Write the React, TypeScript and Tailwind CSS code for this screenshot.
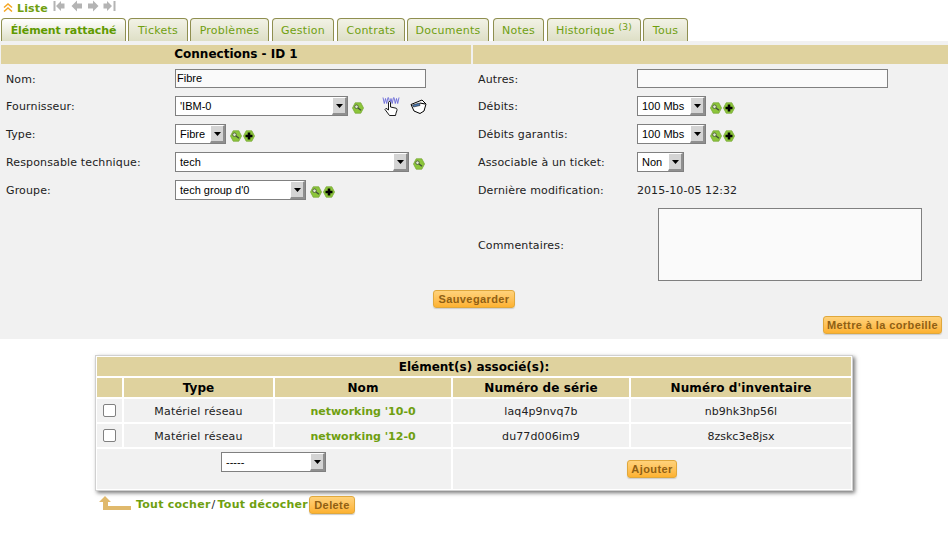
import type { ReactNode } from "react";

const FONT = "font-['DejaVu_Sans',sans-serif]";

function Hex({ children }: { children: ReactNode }) {
  return (
    <svg width="12" height="12" viewBox="0 0 12 12" className="shrink-0 mt-[3px]">
      <path d="M3.200.8h5.600L11.500 6 8.800 11.200H3.200L.5 6z" fill="#8cc63a" stroke="#7aa83a" strokeWidth=".8" strokeLinejoin="round" />
      {children}
    </svg>
  );
}

function SearchIcon() {
  return (
    <Hex>
      <circle cx="4.500" cy="4.700" r="1.800" fill="#dfe8d0" stroke="#44503a" strokeWidth=".8" />
      <path d="M6 6l3 2.300" stroke="#44503a" strokeWidth="1.400" />
    </Hex>
  );
}

function AddIcon() {
  return (
    <Hex>
      <path d="M6 2.500v7M2.500 6h7" stroke="#000" strokeWidth="2.600" />
    </Hex>
  );
}

function Select({ w, label }: { w: string; label: string }) {
  return (
    <div className={`${w} h-[20px] flex items-stretch border border-[#808080] bg-white font-['Liberation_Sans',sans-serif] text-[11px] text-black`}>
      <span className="flex-1 pl-[4px] leading-[18px] whitespace-nowrap overflow-hidden">{label}</span>
      <span className="w-[15px] flex items-center justify-center bg-[#d4d4d4] border-t border-l border-white border-r-2 border-b-2 border-r-[#8f8f8f] border-b-[#8f8f8f]">
        <svg width="7" height="4" viewBox="0 0 7 4"><path d="M0 0h7L3.500 4z" fill="#000" /></svg>
      </span>
    </div>
  );
}

function Btn({ w, children }: { w: string; children: ReactNode }) {
  return (
    <button className={`${w} h-[18px] rounded-[3px] border border-[#e0a83c] bg-gradient-to-b from-[#ffd27a] to-[#fdb22f] font-['Liberation_Sans',sans-serif] font-bold text-[11px] leading-[15px] text-[#8f5f14] tracking-[0.4px] shadow-[0_1px_1px_#ccc] whitespace-nowrap`}>
      {children}
    </button>
  );
}

function Row({ label, children, flat, labelW = "w-[169px]", labelPad = "" }: { label: string; children?: ReactNode; flat?: boolean; labelW?: string; labelPad?: string }) {
  return (
    <div className="h-[28px] flex items-center">
      <span className={`${labelW} ${labelPad} shrink-0 text-[11px] tracking-[0.14px] text-[#222]`}>{label}</span>
      <div className={flat ? "" : "-mt-[2px]"}>{children}</div>
    </div>
  );
}

function Tab({ w, ml, children, active }: { w: string; ml?: string; children: ReactNode; active?: boolean }) {
  return (
    <div
      className={`${w} ${ml ?? ""} h-[23px] text-center rounded-t-[4px] border border-b-0 border-[#8f8f50] text-[11px] leading-[23px] whitespace-nowrap bg-gradient-to-b ${
        active
          ? "from-white to-[#dedfc6] font-bold tracking-[-0.1px] text-[#5f9a00]"
          : "from-[#f2f2e6] to-[#dedfc6] tracking-[0.25px] text-[#6f9f10]"
      }`}
    >
      {children}
    </div>
  );
}

export default function App() {
  return (
    <div className={`${FONT} w-[948px] h-[540px] bg-white overflow-hidden`}>
      <div className="h-[18px] pl-[3px] flex items-start">
        <svg width="10" height="9" viewBox="0 0 10 9" fill="none" stroke="#f5a623" strokeWidth="1.500" className="mt-[3px]">
          <path d="M1 4.500L5 1l4 3.500M1 8.500L5 5l4 3.500" />
        </svg>
        <span className="ml-[4px] mt-[1px] text-[11px] font-bold tracking-[0.15px] text-[#6f9f10] leading-[16px]">Liste</span>
        <svg width="64" height="12" viewBox="0 0 64 12" fill="#b4b4b4" className="ml-[5px]">
          <path d="M.5 1h2v10h-2zM3 6l5-5v2.500h3.500v5H8V11z" />
          <path d="M18.500 6l5.500-5.500v3h5v5h-5v3z" />
          <path d="M45.500 6L40 .5v3h-5v5h5v3z" />
          <path d="M59 6l-5-5v2.500h-3.500v5H54V11zM60.500 1h2v10h-2z" />
        </svg>
      </div>

      <div className="h-[23px] pl-[1px] flex items-end gap-[2px]">
        <Tab w="w-[125px]" active>Élément rattaché</Tab>
        <Tab w="w-[60px]">Tickets</Tab>
        <Tab w="w-[79px]">Problèmes</Tab>
        <Tab w="w-[62px]" ml="ml-[1px]">Gestion</Tab>
        <Tab w="w-[68px]" ml="ml-[1px]">Contrats</Tab>
        <Tab w="w-[82px]">Documents</Tab>
        <Tab w="w-[51px]" ml="ml-[2px]">Notes</Tab>
        <Tab w="w-[94px]" ml="ml-[1px]">Historique <sup className="text-[9px]">(3)</sup></Tab>
        <Tab w="w-[45px]">Tous</Tab>
      </div>

      <div className="h-[298px] bg-[#f1f1f1] pt-[4px]">
        <div className="h-[19px] flex gap-[2px] pl-[1px] text-[12px] font-bold text-black leading-[19px]">
          <div className="w-[470px] bg-[#dfd29e] text-center">Connections - ID 1</div>
          <div className="flex-1 bg-[#dfd29e]" />
        </div>

        <div className="flex pt-[1px]">
          <div className="w-[472px] pl-[6px]">
            <Row label="Nom:" labelPad="pt-[2px]">
              <div className="w-[251px] h-[19px] border border-[#808080] bg-[#fafafa] font-['Liberation_Sans',sans-serif] text-[11px] leading-[17px] pl-[1px]">Fibre</div>
            </Row>
            <Row label="Fournisseur:">
              <div className="flex items-center gap-[4px]">
                <Select w="w-[173px]" label="'IBM-0" />
                <SearchIcon />
                <svg width="18" height="19" viewBox="0 0 18 19" className="ml-[14px]">
                  <path d="M1 .5l1.300 6 1.200-5 1.200 5L6 .5M6.500.5l1.300 6L9 1.500l1.200 5 1.300-6M12 .5l1.300 6 1.200-5 1.200 5L17 .5" fill="none" stroke="#6a6ad8" strokeWidth=".9" />
                  <path d="M7.500 18.500L3 12.500l1-1.200 2.500 1.700V5.500c0-1.300 2-1.300 2 0V10l5.500 1.200c1 .3 1 1 1 2l-1 3-.5 2.300z" fill="#fff" stroke="#000" strokeWidth=".9" />
                </svg>
                <svg width="17" height="15" viewBox="0 0 17 15" className="ml-[6px] mt-[1px]">
                  <path d="M1 5.500L12 1l4 4-2 7-4 2.500L4 12z" fill="#fff" stroke="#000" strokeWidth="1" />
                  <path d="M2.500 6l7-2 .5 2.500-6.500 1.500z" fill="#4a78b0" stroke="#000" strokeWidth=".5" />
                  <path d="M10 4l5 1" stroke="#000" strokeWidth="1.200" />
                </svg>
              </div>
            </Row>
            <Row label="Type:">
              <div className="flex items-center gap-[4px]">
                <Select w="w-[51px]" label="Fibre" />
                <div className="flex gap-[1px]"><SearchIcon /><AddIcon /></div>
              </div>
            </Row>
            <Row label="Responsable technique:">
              <div className="flex items-center gap-[4px]">
                <Select w="w-[234px]" label="tech" />
                <SearchIcon />
              </div>
            </Row>
            <Row label="Groupe:">
              <div className="flex items-center gap-[4px]">
                <Select w="w-[131px]" label="tech group d'0" />
                <div className="flex gap-[1px]"><SearchIcon /><AddIcon /></div>
              </div>
            </Row>
          </div>

          <div className="flex-1 pl-[6px]">
            <Row label="Autres:" labelW="w-[159px]" labelPad="pt-[2px]">
              <div className="w-[251px] h-[19px] border border-[#808080] bg-[#fafafa]" />
            </Row>
            <Row label="Débits:" labelW="w-[159px]">
              <div className="flex items-center gap-[4px]">
                <Select w="w-[69px]" label="100 Mbs" />
                <div className="flex gap-[1px]"><SearchIcon /><AddIcon /></div>
              </div>
            </Row>
            <Row label="Débits garantis:" labelW="w-[159px]">
              <div className="flex items-center gap-[4px]">
                <Select w="w-[69px]" label="100 Mbs" />
                <div className="flex gap-[1px]"><SearchIcon /><AddIcon /></div>
              </div>
            </Row>
            <Row label="Associable à un ticket:" labelW="w-[159px]">
              <Select w="w-[47px]" label="Non" />
            </Row>
            <Row label="Dernière modification:" labelW="w-[159px]" flat>
              <span className="block leading-[14px] text-[11px] tracking-[0.06px] text-[#222]">2015-10-05 12:32</span>
            </Row>
            <div className="h-[73px] mt-[3px] flex items-center">
              <span className="w-[180px] shrink-0 pt-[3px] text-[11px] tracking-[0.14px] text-[#222]">Commentaires:</span>
              <div className="w-[264px] h-[73px] border border-[#808080] bg-[#fafafa]" />
            </div>
          </div>
        </div>

        <div className="flex justify-center pt-[9px]"><Btn w="w-[82px]">Sauvegarder</Btn></div>
        <div className="flex justify-end pt-[8px] pr-[6px]"><Btn w="w-[119px]">Mettre à la corbeille</Btn></div>
      </div>

      <div className="ml-[95px] mt-[16px] w-[758px] h-[136px] bg-white border border-[#d0d0d0] p-[1px] shadow-[2px_2px_4px_#777] text-[11px]">
        <div className="h-[19px] bg-[#dfd29e] text-center text-[12px] font-bold leading-[20px] text-black">Elément(s) associé(s):</div>
        <div className="mt-[2px] grid grid-cols-[25px_149px_176px_176px_1fr] gap-[2px] text-center">
          <div className="h-[19px] bg-[#dfd29e]" />
          {["Type", "Nom", "Numéro de série", "Numéro d'inventaire"].map((h) => (
            <div key={h} className="h-[19px] bg-[#dfd29e] text-[12px] font-bold tracking-[0.1px] leading-[20px] text-black">{h}</div>
          ))}
          {[
            ["networking '10-0", "laq4p9nvq7b", "nb9hk3hp56l"],
            ["networking '12-0", "du77d006im9", "8zskc3e8jsx"],
          ].map(([name, serial, inv]) => (
            <div key={name} className="contents">
              <div className="h-[23px] bg-[#f1f1f1] flex items-center justify-center">
                <input type="checkbox" className="w-[13px] h-[13px] appearance-none rounded-[2px] border border-[#808080] bg-white" />
              </div>
              <div className="h-[23px] bg-[#f1f1f1] leading-[25px] tracking-[0.2px] text-[#222]">Matériel réseau</div>
              <div className="h-[23px] bg-[#f1f1f1] leading-[25px] font-bold text-[#6f9f10]">{name}</div>
              <div className="h-[23px] bg-[#f1f1f1] leading-[25px] tracking-[0.1px] text-[#222]">{serial}</div>
              <div className="h-[23px] bg-[#f1f1f1] leading-[25px] text-[#222]">{inv}</div>
            </div>
          ))}
        </div>
        <div className="mt-[2px] grid grid-cols-[354px_1fr] gap-[2px]">
          <div className="h-[40px] bg-[#f1f1f1] pt-[3px] pr-[1px] flex justify-center">
            <Select w="w-[105px]" label="-----" />
          </div>
          <div className="h-[40px] bg-[#f1f1f1] pt-[11px] flex justify-center"><Btn w="w-[50px]">Ajouter</Btn></div>
        </div>
      </div>

      <div className="ml-[99px] mt-[5px] flex items-center text-[11px] font-bold tracking-[0.25px] text-[#6f9f10]">
        <svg width="33" height="15" viewBox="0 0 33 15" className="shrink-0 -mt-[3px]">
          <path d="M6 0l6 6H9v4h23v4H4V6H0z" fill="#e0b96c" />
        </svg>
        <span className="ml-[4px]">Tout cocher</span>
        <span className="ml-[1px] mr-[2px] font-normal text-[#222]">/</span>
        <span>Tout décocher</span>
        <span className="ml-[1px]"><Btn w="w-[46px]">Delete</Btn></span>
      </div>
    </div>
  );
}
